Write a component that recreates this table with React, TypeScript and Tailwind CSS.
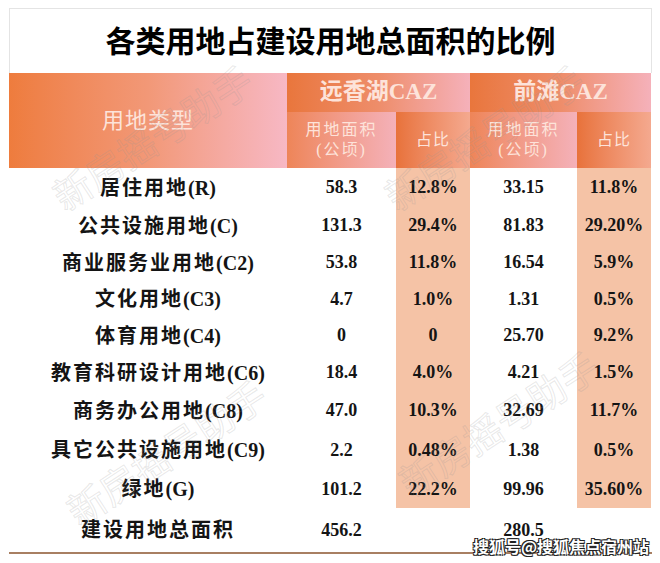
import React from 'react'

const SERIF = 'font-["Liberation_Serif","Noto_Sans_CJK_SC",serif]'

const ROWS = [
  { name: '居住用地', code: '(R)', a: '58.3', ap: '12.8%', b: '33.15', bp: '11.8%', h: 'h-[39px]' },
  { name: '公共设施用地', code: '(C)', a: '131.3', ap: '29.4%', b: '81.83', bp: '29.20%', h: 'h-[37px]' },
  { name: '商业服务业用地', code: '(C2)', a: '53.8', ap: '11.8%', b: '16.54', bp: '5.9%', h: 'h-[37px]' },
  { name: '文化用地', code: '(C3)', a: '4.7', ap: '1.0%', b: '1.31', bp: '0.5%', h: 'h-[36px]' },
  { name: '体育用地', code: '(C4)', a: '0', ap: '0', b: '25.70', bp: '9.2%', h: 'h-[37px]' },
  { name: '教育科研设计用地', code: '(C6)', a: '18.4', ap: '4.0%', b: '4.21', bp: '1.5%', h: 'h-[37px]' },
  { name: '商务办公用地', code: '(C8)', a: '47.0', ap: '10.3%', b: '32.69', bp: '11.7%', h: 'h-[39px]' },
  { name: '具它公共设施用地', code: '(C9)', a: '2.2', ap: '0.48%', b: '1.38', bp: '0.5%', h: 'h-[40px]' },
  { name: '绿地', code: '(G)', a: '101.2', ap: '22.2%', b: '99.96', bp: '35.60%', h: 'h-[38px]' },
]

const GRID = 'grid grid-cols-[278px_109px_74px_107px_74px]'

function Watermark({ className }: { className: string }) {
  return (
    <div
      className={`absolute pointer-events-none whitespace-nowrap text-[38px] leading-none font-["Noto_Sans_CJK_SC",sans-serif] text-transparent [-webkit-text-stroke:1px_rgba(150,150,150,0.22)] -rotate-[33deg] -translate-x-1/2 -translate-y-1/2 ${className}`}
    >
      新房摇号助手
    </div>
  )
}

export default function App() {
  return (
    <div className="relative w-[660px] h-[563px] bg-white overflow-hidden pl-[9px] pt-[8px]">
      <div className="w-[643px]">
        {/* Title */}
        <div className="h-[65px] border-t border-x border-[#e4e4e4] flex items-center justify-center">
          <h1 className={`${SERIF} text-[30px] font-bold text-black`}>
            各类用地占建设用地总面积的比例
          </h1>
        </div>

        {/* Header */}
        <div className={`${GRID} grid-rows-[39px_56px] ${SERIF} text-[#fde3da]`}>
          <div className="row-span-2 flex items-center justify-center bg-linear-to-r from-[#ee7c3d] via-[#f29877] to-[#f7b8c4] text-[22px] tracking-[1px]">
            用地类型
          </div>
          <div className="col-span-2 flex items-center justify-center bg-linear-to-r from-[#e9763c] via-[#ee8d6a] to-[#f5b1ba] text-[23px] font-bold">
            远香湖CAZ
          </div>
          <div className="col-span-2 flex items-center justify-center bg-linear-to-r from-[#e9763c] via-[#ee8d6a] to-[#f5b1ba] text-[23px] font-bold">
            前滩CAZ
          </div>
          <div className="flex flex-col items-center justify-center bg-linear-to-r from-[#ee8558] to-[#f4b1b9] text-[16px] leading-[20px] tracking-[2px]">
            <span>用地面积</span>
            <span>(公顷)</span>
          </div>
          <div className="flex items-center justify-center bg-linear-to-r from-[#e8723a] to-[#f4a98f] text-[16px] tracking-[1px]">
            占比
          </div>
          <div className="flex flex-col items-center justify-center bg-linear-to-r from-[#ee8558] to-[#f4b1b9] text-[16px] leading-[20px] tracking-[2px]">
            <span>用地面积</span>
            <span>(公顷)</span>
          </div>
          <div className="flex items-center justify-center bg-linear-to-r from-[#e8723a] to-[#f4a98f] text-[16px] tracking-[1px]">
            占比
          </div>
        </div>

        {/* Body */}
        <div className={`${SERIF} font-bold text-[#141414]`}>
          {ROWS.map((r) => (
            <div key={r.name} className={`${GRID} ${r.h}`}>
              <div className="flex items-center justify-center pl-[20px] text-[20px]">
                <span className="tracking-[2px]">{r.name}</span>
                <span>{r.code}</span>
              </div>
              <div className="flex items-center justify-center text-[18px]">{r.a}</div>
              <div className="flex items-center justify-center text-[18px] bg-[#f5c3a6]">{r.ap}</div>
              <div className="flex items-center justify-center text-[18px]">{r.b}</div>
              <div className="flex items-center justify-center text-[18px] bg-[#f5c3a6]">{r.bp}</div>
            </div>
          ))}
          <div className={`${GRID} h-[44px]`}>
            <div className="flex items-center justify-center pl-[20px] text-[20px] tracking-[2px]">
              建设用地总面积
            </div>
            <div className="flex items-center justify-center text-[18px]">456.2</div>
            <div />
            <div className="flex items-center justify-center text-[18px]">280.5</div>
            <div />
          </div>
        </div>

        <div className="h-[2px] bg-[#a87f62]" />
      </div>

      <Watermark className="left-[152px] top-[137px]" />
      <Watermark className="left-[484px] top-[137px]" />
      <Watermark className="left-[166px] top-[452px]" />
      <Watermark className="left-[498px] top-[423px]" />

      <div className="absolute right-[11px] top-[535px] text-[16px] leading-[22px] font-bold text-white font-['Noto_Sans_CJK_SC',sans-serif] [text-shadow:-1px_-1px_0_#222,1px_-1px_0_#222,-1px_1px_0_#222,1px_1px_0_#222]">
        搜狐号@搜狐焦点宿州站
      </div>
    </div>
  )
}
